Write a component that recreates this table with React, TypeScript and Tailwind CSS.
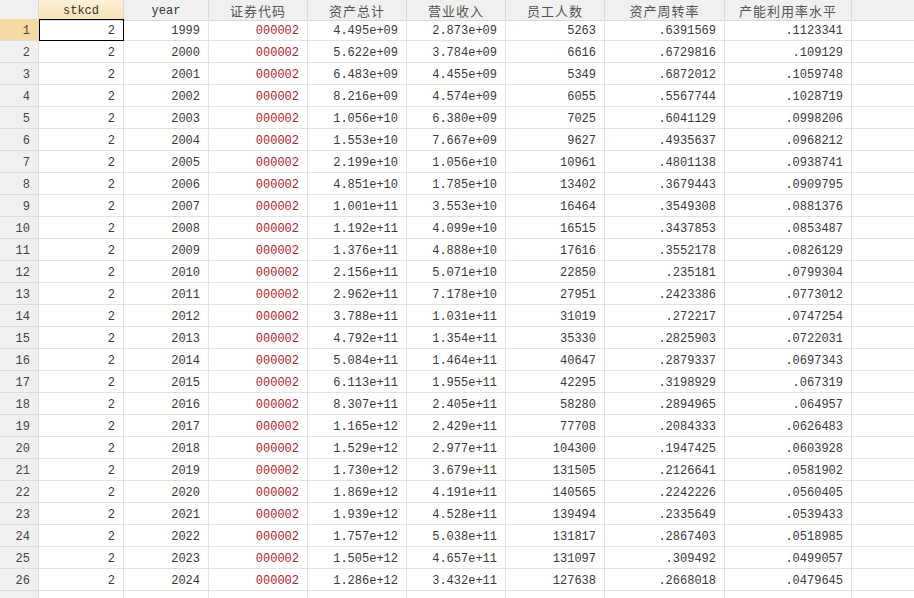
const rows: string[][] = [
  ['1999', '4.495e+09', '2.873e+09', '5263', '.6391569', '.1123341'],
  ['2000', '5.622e+09', '3.784e+09', '6616', '.6729816', '.109129'],
  ['2001', '6.483e+09', '4.455e+09', '5349', '.6872012', '.1059748'],
  ['2002', '8.216e+09', '4.574e+09', '6055', '.5567744', '.1028719'],
  ['2003', '1.056e+10', '6.380e+09', '7025', '.6041129', '.0998206'],
  ['2004', '1.553e+10', '7.667e+09', '9627', '.4935637', '.0968212'],
  ['2005', '2.199e+10', '1.056e+10', '10961', '.4801138', '.0938741'],
  ['2006', '4.851e+10', '1.785e+10', '13402', '.3679443', '.0909795'],
  ['2007', '1.001e+11', '3.553e+10', '16464', '.3549308', '.0881376'],
  ['2008', '1.192e+11', '4.099e+10', '16515', '.3437853', '.0853487'],
  ['2009', '1.376e+11', '4.888e+10', '17616', '.3552178', '.0826129'],
  ['2010', '2.156e+11', '5.071e+10', '22850', '.235181', '.0799304'],
  ['2011', '2.962e+11', '7.178e+10', '27951', '.2423386', '.0773012'],
  ['2012', '3.788e+11', '1.031e+11', '31019', '.272217', '.0747254'],
  ['2013', '4.792e+11', '1.354e+11', '35330', '.2825903', '.0722031'],
  ['2014', '5.084e+11', '1.464e+11', '40647', '.2879337', '.0697343'],
  ['2015', '6.113e+11', '1.955e+11', '42295', '.3198929', '.067319'],
  ['2016', '8.307e+11', '2.405e+11', '58280', '.2894965', '.064957'],
  ['2017', '1.165e+12', '2.429e+11', '77708', '.2084333', '.0626483'],
  ['2018', '1.529e+12', '2.977e+11', '104300', '.1947425', '.0603928'],
  ['2019', '1.730e+12', '3.679e+11', '131505', '.2126641', '.0581902'],
  ['2020', '1.869e+12', '4.191e+11', '140565', '.2242226', '.0560405'],
  ['2021', '1.939e+12', '4.528e+11', '139494', '.2335649', '.0539433'],
  ['2022', '1.757e+12', '5.038e+11', '131817', '.2867403', '.0518985'],
  ['2023', '1.505e+12', '4.657e+11', '131097', '.309492', '.0499057'],
  ['2024', '1.286e+12', '3.432e+11', '127638', '.2668018', '.0479645'],
];

const mono = "font-['Liberation_Mono','Courier_New',monospace] text-[12px]";
const cjk = "font-['Noto_Sans_CJK_SC','Liberation_Sans',sans-serif] text-[13px] tracking-[1px]";

const headers = ['证券代码', '资产总计', '营业收入', '员工人数', '资产周转率', '产能利用率水平'];

const cols = 'grid grid-cols-[39px_85px_85px_99px_99px_99px_99px_120px_127px_1fr]';
const cell = `${mono} flex items-center justify-end pr-[8px] pt-[2px] border-r border-b`;

export default function App() {
  return (
    <div className="w-[914px] h-[598px] overflow-hidden bg-white text-[#3a3a3a]">
      {/* header */}
      <div className={`${cols} h-[19px]`}>
        <div className="border-r border-b border-[#d9d9d9] bg-[#f0f0f0]" />
        <div
          className={`${mono} flex items-center justify-center pt-[2px] border-r border-b border-[#d9d9d9] bg-gradient-to-b from-[#fcf0d6] to-[#f8e1b3] text-[#333]`}
        >
          stkcd
        </div>
        <div className={`${mono} flex items-center justify-center pt-[2px] border-r border-b border-[#d9d9d9] bg-[#f0f0f0] text-[#333]`}>
          year
        </div>
        {headers.map((h) => (
          <div
            key={h}
            className={`${cjk} flex items-center justify-center border-r border-b border-[#d9d9d9] bg-[#f0f0f0] text-[#555] leading-none`}
          >
            {h}
          </div>
        ))}
        <div className="border-b border-[#d9d9d9] bg-[#f0f0f0]" />
      </div>

      {/* body */}
      {rows.map((r, i) => (
        <div key={i} className={`${cols} h-[22px]`}>
          <div
            className={`${cell} border-[#dcdcdc] ${i === 0 ? 'bg-[#f7d9a5]' : 'bg-[#f0f0f0]'} text-[#444]`}
          >
            {i + 1}
          </div>
          <div className={`${cell} ${i === 0 ? 'border border-black' : 'border-[#e2e2e2]'}`}>2</div>
          <div className={`${cell} border-[#e2e2e2]`}>{r[0]}</div>
          <div className={`${cell} border-[#e2e2e2] text-[#b0242b]`}>000002</div>
          {r.slice(1).map((v, j) => (
            <div key={j} className={`${cell} border-[#e2e2e2]`}>
              {v}
            </div>
          ))}
          <div className="border-b border-[#e2e2e2]" />
        </div>
      ))}
      <div className={`${cols} h-[22px]`}>
        <div className="border-r border-[#dcdcdc] bg-[#f0f0f0]" />
        {Array.from({ length: 8 }).map((_, j) => (
          <div key={j} className="border-r border-[#e2e2e2]" />
        ))}
        <div />
      </div>
    </div>
  );
}
